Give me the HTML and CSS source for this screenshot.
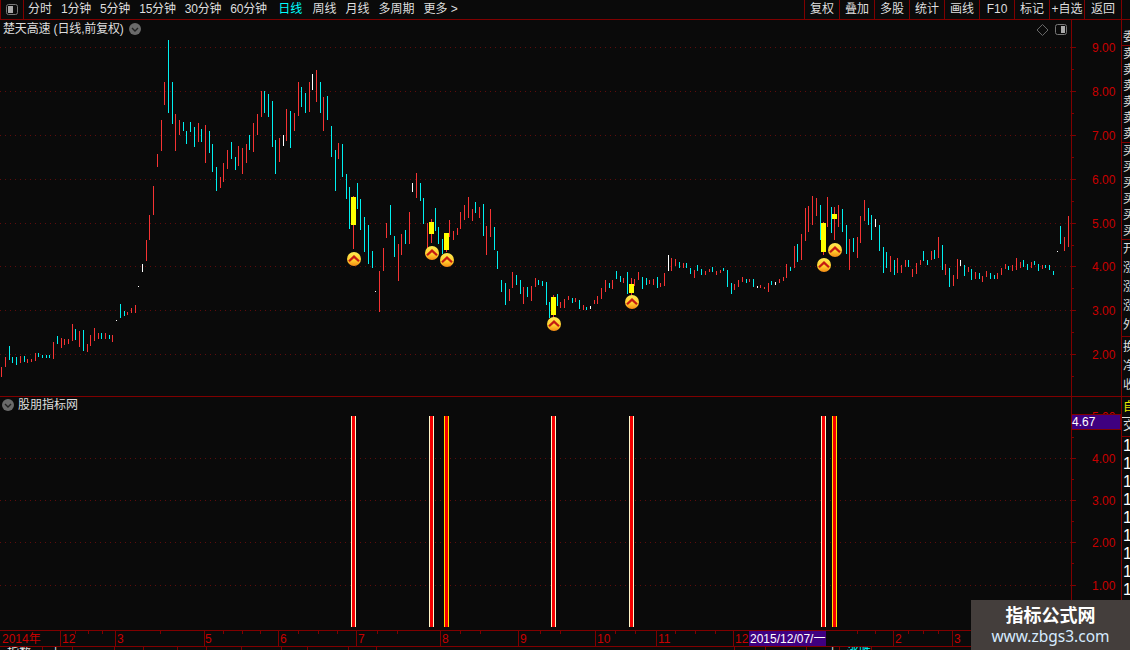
FILE: index.html
```html
<!DOCTYPE html>
<html lang="zh-CN">
<head>
<meta charset="utf-8">
<title>楚天高速</title>
<link rel="stylesheet" href="styles.css">
</head>
<body>
<div class="app">
  <header class="topbar">
    <div class="toggle">
      <svg class="toggle-icon" width="12" height="11" viewBox="0 0 12 11"><rect class="ic-frame" x=".5" y=".5" width="11" height="10" rx="2"/><rect class="ic-fill" x="2" y="2" width="5" height="7"/></svg>
    </div>
    <nav class="periods">
      <span>分时</span><span class="num">1分钟</span><span class="num">5分钟</span><span class="num">15分钟</span><span class="num">30分钟</span><span class="num">60分钟</span><span class="active">日线</span><span>周线</span><span>月线</span><span>多周期</span><span>更多 &gt;</span>
    </nav>
    <div class="actions">
      <span class="act">复权</span><span class="act">叠加</span><span class="act">多股</span><span class="act">统计</span><span class="act">画线</span><span class="act">F10</span><span class="act">标记</span><span class="act">+自选</span><span class="act act-last">返回</span>
    </div>
  </header>

  <div class="workspace">
    <div class="charts">
      <section class="panel panel-main">
        <div class="plot">
          <div class="title">
            <span class="title-text">楚天高速 (日线,前复权)</span>
            <svg class="fold" width="12" height="12" viewBox="0 0 12 12"><circle cx="6" cy="6" r="6"/><path d="M3 5l3 3 3-3"/></svg>
          </div>
          <svg class="canvas" width="1071" height="376" viewBox="0 20 1071 376">
            <defs>
              <linearGradient id="coin" x1="0" y1="0" x2="0" y2="1">
                <stop offset="0" stop-color="#ffea50"/>
                <stop offset=".6" stop-color="#ffcc2c"/>
                <stop offset="1" stop-color="#f58a14"/>
              </linearGradient>
              <g id="signal">
                <circle r="7" fill="url(#coin)"/>
                <path class="sig-chev" d="M-5 2.2L0-2.4 5 2.2"/>
              </g>
            </defs>
            <path class="grid" d="M0 47.5H1071M0 91.5H1071M0 135.5H1071M0 179.5H1071M0 223.5H1071M0 266.5H1071M0 310.5H1071M0 354.5H1071"/>
            <g transform="translate(.5 0)">
              <path class="k-red" d="M1 367V377M5 357V367M20 356V363M27 359V363M31 359V362M35 353V361M53 342V359M61 338V348M64 339V345M68 339V344M72 324V341M79 331V347M87 344V352M90 335V346M94 328V341M98 333V339M105 333V339M112 335V342M127 312V315M131 308V313M135 305V313M146 240V261M149 215V240M153 186V215M157 154V167M161 120V151M164 82V105M175 114V151M179 120V135M198 123V142M205 125V163M220 177V188M223 163V182M227 150V169M238 146V166M242 148V174M246 144V163M253 123V152M257 114V135M261 91V117M279 138V162M286 109V141M294 113V131M298 82V116M309 82V112M316 70V102M323 97V131M338 143V159M353 196V249M379 271V312M383 248V271M386 223V238M398 244V281M401 234V255M409 212V244M416 173V198M427 223V248M431 219V243M446 233V252M449 220V237M453 231V240M457 228V235M460 212V229M464 205V220M468 197V218M472 209V221M479 207V218M486 226V255M490 209V237M509 289V301M512 272V288M523 287V304M531 286V301M535 278V287M553 295V318M560 302V308M564 299V308M568 296V300M575 298V302M583 305V310M594 300V304M597 296V304M601 288V299M605 280V292M612 280V289M623 278V283M631 278V295M634 279V286M638 272V280M649 280V284M653 279V285M660 283V287M664 273V286M671 258V271M675 259V266M683 263V268M694 270V278M705 271V275M709 269V272M716 271V275M720 270V273M734 284V290M738 280V287M742 277V282M749 279V282M760 285V288M764 287V289M768 283V292M779 279V283M783 277V281M786 264V278M794 246V268M801 234V260M805 208V241M808 206V232M812 196V225M816 198V216M823 222V255M827 197V227M834 207V240M838 205V227M849 239V270M857 237V258M860 216V243M864 200V221M890 256V272M897 258V273M901 265V273M905 260V267M912 269V277M916 263V274M920 260V265M931 251V260M938 237V258M945 264V275M953 275V286M957 259V279M968 267V272M975 272V279M982 276V282M986 271V277M997 273V279M1001 268V275M1005 264V269M1012 265V271M1016 258V270M1020 262V268M1031 262V268M1042 265V269M1064 237V251M1068 216V247"/>
              <path class="k-cyan" d="M9 346V360M12 357V363M16 357V365M24 356V362M38 353V357M42 355V358M46 355V358M49 355V358M57 336V344M75 329V340M83 330V351M101 333V339M109 335V339M120 304V318M124 311V316M168 40V113M172 82V124M183 122V131M186 131V144M190 122V132M194 127V147M201 129V142M209 131V153M212 144V172M216 167V191M231 142V159M235 157V170M249 135V150M264 91V113M268 94V117M272 101V147M275 140V174M290 111V148M301 87V107M305 93V113M320 82V113M327 96V120M331 126V157M335 150V191M342 144V177M346 174V199M349 187V229M357 183V209M360 199V230M364 217V252M368 225V264M372 251V268M390 205V235M394 236V257M405 230V244M420 183V201M423 198V224M435 208V231M438 227V244M442 239V254M475 202V213M483 204V236M494 227V250M497 251V269M501 280V292M505 283V305M516 275V285M520 280V294M527 287V297M538 280V285M542 281V286M546 282V305M549 302V318M557 294V306M572 298V303M579 300V309M586 307V310M609 283V288M616 271V279M620 276V282M627 272V294M642 277V289M646 278V285M657 277V288M679 262V268M686 263V268M690 268V274M697 265V271M701 269V275M712 267V272M723 268V271M727 270V287M731 283V294M746 279V283M753 279V287M771 281V285M790 267V271M797 244V262M820 205V240M831 207V233M842 209V232M846 225V254M853 238V252M868 208V225M871 215V240M879 225V251M883 247V273M886 252V268M894 260V275M908 260V267M923 251V261M927 260V265M934 250V259M942 245V270M949 268V287M964 265V276M971 269V280M979 273V279M990 273V279M994 275V279M1008 266V270M1023 260V267M1027 264V270M1034 261V265M1038 264V271M1045 265V268M1049 265V270M1053 271V275M1060 226V244"/>
              <path class="k-white" d="M116 320V321M138 286V287M142 264V272M283 135V146M312 74V90M375 291V292M412 183V192M590 306V309M668 255V271M757 286V288M775 282V285M875 219V227M960 260V266M1057 251V252"/>
            </g>
            <g class="blocks">
              <rect x="351" y="197" width="5" height="28"/>
              <rect x="429" y="222" width="5" height="12"/>
              <rect x="444" y="233" width="5" height="17"/>
              <rect x="551" y="297" width="5" height="18"/>
              <rect x="629" y="284" width="5" height="9"/>
              <rect x="821" y="223" width="5" height="29"/>
              <rect x="832" y="214" width="5" height="5"/>
            </g>
            <use href="#signal" x="354" y="259"/>
            <use href="#signal" x="432" y="253"/>
            <use href="#signal" x="447" y="260"/>
            <use href="#signal" x="554" y="324"/>
            <use href="#signal" x="632" y="302"/>
            <use href="#signal" x="824" y="265"/>
            <use href="#signal" x="835" y="250"/>
            <path class="ic-diamond" d="M1042.5 24.5L1048 30 1042.5 35.5 1037 30Z"/>
            <rect class="ic-frame" x="1055.5" y="24.5" width="11" height="10" rx="2"/>
            <rect class="ic-fill" x="1061" y="26" width="4" height="7"/>
          </svg>
        </div>
        <svg class="axis" width="50" height="376" viewBox="1071 20 50 376">
          <path class="tick" d="M1071 47.5h5M1071 69.5h3M1071 91.5h5M1071 113.5h3M1071 135.5h5M1071 157.5h3M1071 179.5h5M1071 201.5h3M1071 223.5h5M1071 245.5h3M1071 266.5h5M1071 288.5h3M1071 310.5h5M1071 332.5h3M1071 354.5h5M1071 376.5h3"/>
          <g class="axis-text">
            <text x="1092" y="52">9.00</text>
            <text x="1092" y="96">8.00</text>
            <text x="1092" y="140">7.00</text>
            <text x="1092" y="184">6.00</text>
            <text x="1092" y="228">5.00</text>
            <text x="1092" y="271">4.00</text>
            <text x="1092" y="315">3.00</text>
            <text x="1092" y="359">2.00</text>
          </g>
        </svg>
      </section>

      <section class="panel panel-sub">
        <div class="plot">
          <div class="title title-sub">
            <svg class="fold" width="12" height="12" viewBox="0 0 12 12"><circle cx="6" cy="6" r="6"/><path d="M3 5l3 3 3-3"/></svg>
            <span>股朋指标网</span>
          </div>
          <svg class="canvas" width="1071" height="233" viewBox="0 397 1071 233">
            <path class="grid" d="M0 458.5H1071M0 500.5H1071M0 542.5H1071M0 585.5H1071"/>
            <g class="sig-w">
              <rect x="351" y="416" width="5" height="211"/>
              <rect x="429" y="416" width="5" height="211"/>
              <rect x="551" y="416" width="5" height="211"/>
              <rect x="629" y="416" width="5" height="211"/>
              <rect x="821" y="416" width="5" height="211"/>
            </g>
            <g class="sig-y">
              <rect x="444" y="416" width="5" height="211"/>
              <rect x="832" y="416" width="5" height="211"/>
            </g>
            <path class="sig-core" d="M352 416h3v211h-3zM430 416h3v211h-3zM445 416h3v211h-3zM552 416h3v211h-3zM630 416h3v211h-3zM822 416h3v211h-3zM833 416h3v211h-3z"/>
          </svg>
        </div>
        <svg class="axis" width="50" height="233" viewBox="1071 397 50 233">
          <path class="tick" d="M1071 437.5h3M1071 458.5h5M1071 479.5h3M1071 500.5h5M1071 521.5h3M1071 542.5h5M1071 563.5h3M1071 585.5h5M1071 606.5h3"/>
          <g class="axis-text">
            <text x="1092" y="421">5.00</text>
            <text x="1092" y="463">4.00</text>
            <text x="1092" y="505">3.00</text>
            <text x="1092" y="547">2.00</text>
            <text x="1092" y="590">1.00</text>
          </g>
          <rect class="cursor" x="1071.5" y="414.5" width="49" height="15"/>
          <text class="cursor-text" x="1072" y="426">4.67</text>
        </svg>
      </section>

      <svg class="timeline" width="1121" height="17" viewBox="0 630 1121 17">
        <path class="tick" d="M0 630.5H1121M0 646.5H1121M60.5 631V646M115.5 631V646M204.5 631V646M278.5 631V646M356.5 631V646M440.5 631V646M518.5 631V646M595.5 631V646M656.5 631V646M733.5 631V646M893.5 631V646M952.5 631V646M75.5 631v3M88.5 631v3M102.5 631v3M160.5 631v3M223.5 631v3M242.5 631v3M260.5 631v3M298.5 631v3M318.5 631v3M337.5 631v3M377.5 631v3M397.5 631v3M460.5 631v3M480.5 631v3M540.5 631v3M560.5 631v3M615.5 631v3M635.5 631v3M675.5 631v3M695.5 631v3M715.5 631v3M857.5 631v3M875.5 631v3M908.5 631v3M923.5 631v3M938.5 631v3"/>
        <g class="axis-text">
          <text x="2" y="643">2014年</text>
          <text x="62" y="643">12</text>
          <text x="117" y="643">3</text>
          <text x="205" y="643">5</text>
          <text x="280" y="643">6</text>
          <text x="358" y="643">7</text>
          <text x="442" y="643">8</text>
          <text x="520" y="643">9</text>
          <text x="597" y="643">10</text>
          <text x="658" y="643">11</text>
          <text x="735" y="643">12</text>
          <text x="895" y="643">2</text>
          <text x="954" y="643">3</text>
        </g>
        <rect class="date-box" x="749" y="631" width="77" height="15"/>
        <text class="date-text" x="750" y="643">2015/12/07/一</text>
      </svg>

      <div class="status">
        <span class="cell c1">指数</span><span class="cell c2">上</span><span class="cell c3"></span><span class="cell c4"></span><span class="cell c5"></span><span class="cell c6"></span><span class="cell c7"></span><span class="cell c8"></span><span class="cell c9"></span><span class="cell c10"></span><span class="cell c11"></span><span class="cell c12"></span><span class="cell c13"></span><span class="cell c14"></span><span class="cell c15">上</span><span class="cell c16 cyan">涨跌</span>
      </div>
    </div>

    <aside class="side">
      <div class="side-group g-head"><div class="row">委</div></div>
      <div class="side-group g-six"><div class="row">卖</div><div class="row">卖</div><div class="row">卖</div><div class="row">卖</div><div class="row">卖</div><div class="row">卖</div></div>
      <div class="side-group g-six"><div class="row">买</div><div class="row">买</div><div class="row">买</div><div class="row">买</div><div class="row">买</div><div class="row">买</div></div>
      <div class="side-group g-six g-wide"><div class="row">开</div><div class="row">涨</div><div class="row">涨</div><div class="row">涨</div><div class="row">外</div></div>
      <div class="side-group g-tail"><div class="row">换</div><div class="row">净</div><div class="row">收</div></div>
      <div class="side-mark">自</div>
      <div class="side-group g-deal"><div class="row">交</div></div>
      <div class="nums"><div>1</div><div>1</div><div>1</div><div>1</div><div>1</div><div>1</div><div>1</div><div>1</div><div>1</div><div>1</div><div>1</div></div>
    </aside>
  </div>

  <div class="watermark">
    <div class="wm-title">指标公式网</div>
    <div class="wm-url">www.zbgs3.com</div>
  </div>
</div>
</body>
</html>
```

FILE: styles.css
```css
* { box-sizing: border-box; }
html, body { margin: 0; padding: 0; background: #0a0a0a; }
body { font: 12px/16px "Liberation Sans", "Noto Sans CJK SC", sans-serif; color: #dedede; }

.app { position: relative; width: 1130px; height: 650px; overflow: hidden; display: flex; flex-direction: column; background: #0a0a0a; }

.topbar { flex: none; height: 20px; display: flex; align-items: stretch; border-bottom: 1px solid #800000; line-height: 19px; }
.toggle { width: 24px; border-left: 1px solid #800000; border-right: 1px solid #800000; display: flex; align-items: center; justify-content: center; }
.toggle-icon { display: block; margin-left: -1px; }
.periods { display: flex; gap: 9px; padding-left: 4px; white-space: nowrap; }
.periods .num { letter-spacing: -.2px; }
.periods .active { color: #00ffff; margin-left: 2.3px; margin-right: 1.3px; }
.actions { margin-left: auto; margin-right: 8px; display: flex; }
.act { width: 35px; border-left: 1px solid #800000; text-align: center; white-space: nowrap; }
.act-last { width: 38px; border-right: 1px solid #800000; }

.ic-frame { fill: #0a0a0a; stroke: #777; }
.ic-fill { fill: #aaa; }
.ic-diamond { fill: none; stroke: #666; }

.workspace { flex: 1; min-height: 0; display: flex; }
.charts { width: 1122px; flex: none; display: flex; flex-direction: column; border-right: 1px solid #800000; }

.panel { flex: none; display: flex; border-bottom: 1px solid #800000; }
.panel-main { height: 377px; }
.panel-sub { height: 233px; border-bottom: 0; }
.plot { position: relative; width: 1071px; flex: none; }
.canvas, .axis, .timeline { display: block; }
.axis { flex: none; background: linear-gradient(#800000, #800000) left top / 1px 100% no-repeat; }

.title { position: absolute; left: 3px; top: 0; height: 18px; display: flex; align-items: center; gap: 5px; white-space: nowrap; line-height: 18px; }
.title-text { letter-spacing: -.15px; }
.title-sub { left: 2px; top: 0; height: 16px; gap: 4px; }
.fold circle { fill: #6a6a6a; }
.fold path { fill: none; stroke: #222; stroke-width: 1.4; }

.grid { fill: none; stroke: #5f0c0c; stroke-dasharray: 1 4; shape-rendering: crispEdges; }
.k-red, .k-cyan, .k-white { fill: none; stroke-width: 1; shape-rendering: crispEdges; }
.k-red { stroke: #f63333; }
.k-cyan { stroke: #00f0f0; }
.k-white { stroke: #ffffff; }
.blocks rect { fill: #ffff00; }
.sig-chev { fill: none; stroke: #c41a12; stroke-width: 2.2; }

.sig-w rect { fill: #fff6c8; }
.sig-y rect { fill: #ffdf00; }
.sig-core { fill: #f40000; }

.tick { fill: none; stroke: #800000; shape-rendering: crispEdges; }
.axis-text text { fill: #c80000; font: 12px "Liberation Sans", "Noto Sans CJK SC", sans-serif; }
.cursor { fill: #3f0080; stroke: #800000; }
.cursor-text { fill: #ffffff; font: 12px "Liberation Sans", sans-serif; }

.timeline { flex: none; }
.date-box { fill: #3f0080; }
.date-text { fill: #ffffff; font: 12px "Liberation Sans", "Noto Sans CJK SC", sans-serif; }

.status { flex: 1; display: flex; overflow: hidden; line-height: 12px; }
.cell { height: 12px; border-right: 1px solid #800000; white-space: nowrap; padding-left: 7px; overflow: hidden; }
.cyan { color: #00ffff; }
.c1 { width: 43px; }
.c2 { width: 30px; }
.c3 { width: 42px; }
.c4 { width: 29px; }
.c5 { width: 34px; }
.c6 { width: 29px; }
.c7 { width: 35px; }
.c8 { width: 40px; }
.c9 { width: 26px; }
.c10 { width: 41px; }
.c11 { width: 28px; }
.c12 { width: 358px; }
.c13 { width: 31px; }
.c14 { width: 41px; }
.c15 { width: 33px; padding-left: 20px; }
.c16 { width: 32px; }

.side { flex: 1; min-width: 0; overflow: hidden; display: flex; flex-direction: column; }
.side-group { flex: none; border-bottom: 1px solid #800000; }
.row { height: 16px; line-height: 16px; padding-left: 1px; white-space: nowrap; }
.g-head { height: 26px; padding-top: 9px; }
.g-six { height: 97px; }
.g-wide .row { height: 19px; line-height: 19px; }
.g-tail { height: 60px; padding-top: 1px; }
.g-tail .row { height: 19px; line-height: 19px; }
.side-mark { flex: none; height: 21px; line-height: 20px; padding-left: 1px; color: #e8e800; border-bottom: 1px solid #dedede; }
.g-deal { height: 19px; }
.nums { flex: none; font: 16px/18px "Liberation Sans", sans-serif; color: #ffffff; padding-left: 1px; }
.nums div { height: 18px; }

.watermark { position: absolute; left: 971px; top: 600px; width: 159px; height: 50px; background: #443e3c; text-align: center; color: #fff; }
.wm-title { font: bold 18px/24px "Noto Sans CJK SC", sans-serif; margin-top: 2px; }
.wm-url { font: 15.5px/20px "Noto Sans", sans-serif; color: #d6ebff; }
```
